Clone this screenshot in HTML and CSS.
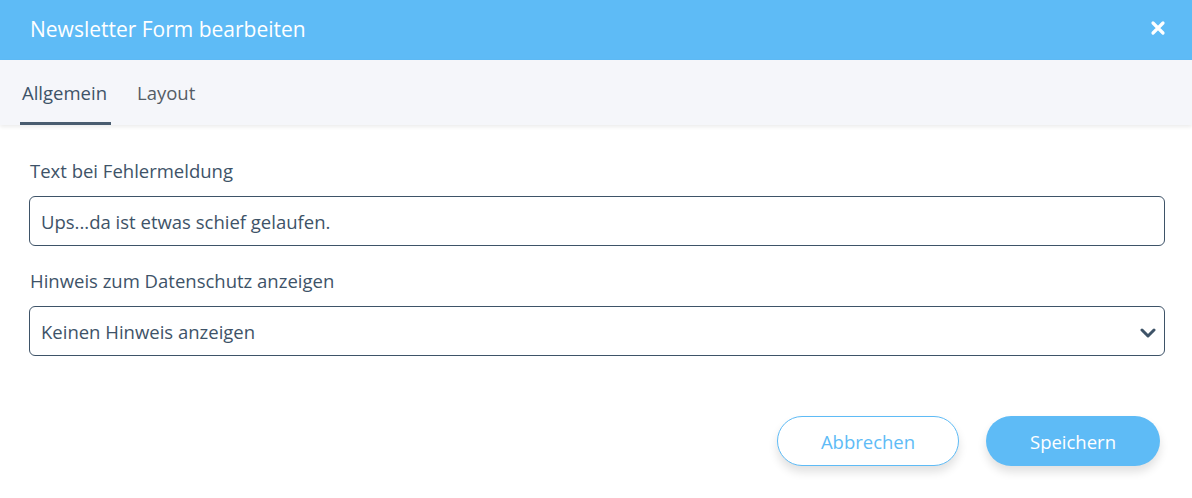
FILE: index.html
```html
<!DOCTYPE html>
<html lang="de">
<head>
    <meta charset="UTF-8">
    <meta name="viewport" content="width=device-width, initial-scale=1.0">
    <title>Newsletter Form bearbeiten</title>
    <link rel="stylesheet" href="styles.css">
</head>
<body>
    <div class="modal">
        <div class="modal-header">
            <h1>Newsletter Form bearbeiten</h1>
            <button class="close-btn" aria-label="Schließen">
                <svg width="16" height="16" viewBox="0 0 16 16">
                    <path d="M3 3 L13 13 M13 3 L3 13" stroke="#fff" stroke-width="3.2" stroke-linecap="round"/>
                </svg>
            </button>
        </div>

        <div class="tabs">
            <div class="tab active">Allgemein</div>
            <div class="tab">Layout</div>
        </div>

        <div class="modal-body">
            <div class="field">
                <label for="error-text">Text bei Fehlermeldung</label>
                <input type="text" id="error-text" value="Ups...da ist etwas schief gelaufen.">
            </div>

            <div class="field">
                <label for="privacy">Hinweis zum Datenschutz anzeigen</label>
                <div class="select-wrap">
                    <select id="privacy">
                        <option>Keinen Hinweis anzeigen</option>
                    </select>
                    <svg class="chevron" width="16" height="10" viewBox="0 0 16 10">
                        <path d="M2 2 L8 8 L14 2" fill="none" stroke="#3e5368" stroke-width="3" stroke-linecap="round" stroke-linejoin="round"/>
                    </svg>
                </div>
            </div>
        </div>

        <div class="modal-footer">
            <button class="btn btn-outline">Abbrechen</button>
            <button class="btn btn-primary">Speichern</button>
        </div>
    </div>
</body>
</html>
```

FILE: styles.css
```css
* {
    margin: 0;
    padding: 0;
    box-sizing: border-box;
    font-family: "Open Sans", Arial, sans-serif;
}

body {
    background: #fff;
    color: #3e5368;
}

.modal {
    width: 1192px;
    height: 498px;
    display: flex;
    flex-direction: column;
}

.modal-header {
    height: 60px;
    flex-shrink: 0;
    background: #5ebbf6;
    display: flex;
    align-items: center;
    justify-content: space-between;
    padding: 0 26px 0 30px;
}

.modal-header h1 {
    font-size: 21px;
    font-weight: 400;
    color: #fff;
    margin-top: -2px;
}

.close-btn {
    background: none;
    border: none;
    cursor: pointer;
    display: flex;
    margin-top: -4px;
}

.tabs {
    height: 65px;
    flex-shrink: 0;
    background: #f5f6fa;
    display: flex;
    gap: 24px;
    padding-left: 20px;
    box-shadow: 0 2px 4px rgba(0, 0, 0, 0.08);
    position: relative;
}

.tab {
    font-size: 18.5px;
    color: #555d66;
    padding: 20px 4px 0 2px;
    border-bottom: 3px solid transparent;
}

.tab.active {
    color: #3e5368;
    border-bottom-color: #4a5d70;
}

.modal-body {
    padding: 33px 27px 0 29px;
    display: flex;
    flex-direction: column;
    gap: 22px;
}

.field label {
    display: block;
    font-size: 18.5px;
    margin-bottom: 13px;
    padding-left: 1px;
}

.field input,
.field select {
    width: 100%;
    height: 50px;
    border: 1px solid #3e5368;
    border-radius: 6px;
    padding: 0 11px;
    font-size: 18.5px;
    color: #3e5368;
    background: #fff;
    outline: none;
}

.select-wrap {
    position: relative;
}

.field select {
    appearance: none;
    -webkit-appearance: none;
}

.chevron {
    position: absolute;
    right: 9px;
    top: 22px;
    pointer-events: none;
}

.modal-footer {
    display: flex;
    justify-content: flex-end;
    gap: 27px;
    padding: 60px 32px 0 0;
}

.btn {
    height: 50px;
    border-radius: 25px;
    font-size: 18.5px;
    cursor: pointer;
    box-shadow: 0 6px 10px rgba(0, 0, 0, 0.12);
}

.btn-outline {
    width: 182px;
    background: #fff;
    border: 1px solid #5ebbf6;
    color: #5ebbf6;
}

.btn-primary {
    width: 174px;
    background: #5ebbf6;
    border: none;
    color: #fff;
}
```
